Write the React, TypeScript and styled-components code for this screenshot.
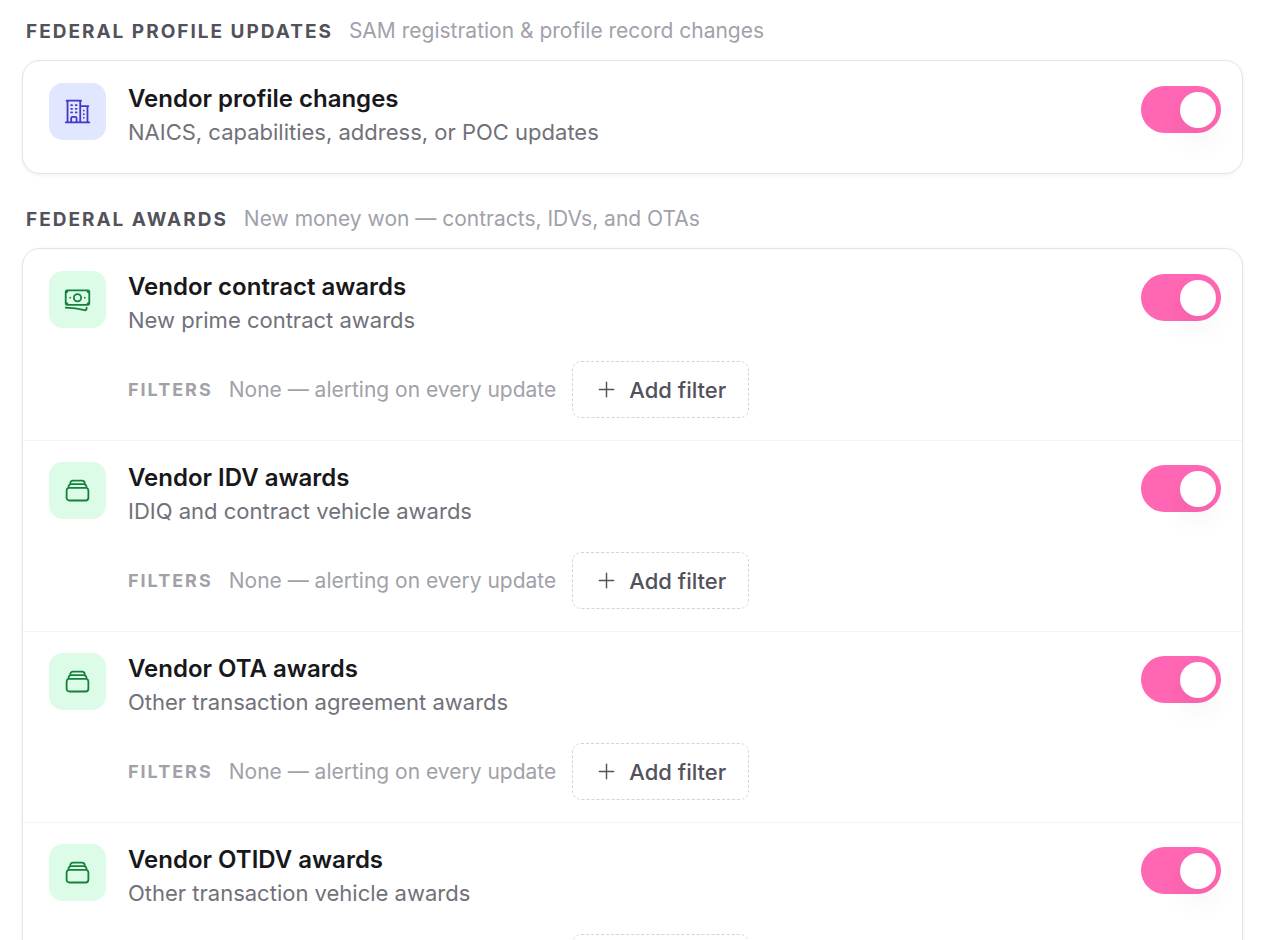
import React, { useId, useState } from "react";
import styled, { createGlobalStyle } from "styled-components";
import type { IconType } from "react-icons";
import {
  HiOutlineBanknotes,
  HiOutlineBuildingOffice2,
  HiOutlinePlus,
  HiOutlineRectangleStack,
} from "react-icons/hi2";

const GlobalStyle = createGlobalStyle`
  *, *::before, *::after { box-sizing: border-box; }
  body {
    margin: 0;
    background: #fff;
    font-family: Inter, "Liberation Sans", sans-serif;
    -webkit-font-smoothing: antialiased;
  }
`;

type Tone = "indigo" | "green";

const tones: Record<Tone, { background: string; color: string }> = {
  indigo: { background: "#e0e7ff", color: "#4338ca" },
  green: { background: "#dcfce7", color: "#15803d" },
};

const Page = styled.main`
  display: flex;
  flex-direction: column;
  gap: 30px;
  padding: 16px 23px 30px 22px;
`;

const Section = styled.section`
  display: flex;
  flex-direction: column;
  gap: 13px;
`;

const SectionHeader = styled.header`
  display: flex;
  align-items: baseline;
  gap: 16px;
  padding: 0 4px;
  line-height: 30px;
`;

const SectionTitle = styled.h2`
  margin: 0;
  font-size: 19px;
  font-weight: 700;
  letter-spacing: 2px;
  text-transform: uppercase;
  color: #52525b;
`;

const SectionNote = styled.p`
  margin: 0;
  font-size: 21px;
  color: #a1a1aa;
`;

const Card = styled.ul`
  margin: 0;
  padding: 0;
  list-style: none;
  background: #fff;
  border: 1px solid #e4e4e7;
  border-radius: 18px;
  box-shadow: 0 1px 4px rgba(0, 0, 0, 0.06);
`;

const Row = styled.li`
  display: flex;
  align-items: flex-start;
  gap: 22px;
  padding: 22px 21px 22px 26px;

  & + & {
    padding-top: 21px;
    border-top: 1px solid #f4f4f5;
  }
`;

const IconTile = styled.span<{ $tone: Tone }>`
  display: flex;
  flex: none;
  align-items: center;
  justify-content: center;
  width: 57px;
  height: 57px;
  border-radius: 14px;
  background: ${(p) => tones[p.$tone].background};
  color: ${(p) => tones[p.$tone].color};
`;

const Body = styled.div`
  display: flex;
  flex: 1;
  flex-direction: column;
  gap: 22px;
  min-width: 0;
`;

const Heading = styled.div`
  display: flex;
  flex-direction: column;
  padding-bottom: 2px;
`;

const AlertTitle = styled.label`
  font-size: 24px;
  font-weight: 600;
  line-height: 32px;
  color: #18181b;
`;

const AlertNote = styled.p`
  margin: 0;
  font-size: 22px;
  line-height: 34px;
  color: #71717a;
`;

const Filters = styled.div`
  display: flex;
  align-items: center;
  gap: 16px;
`;

const FiltersLabel = styled.span`
  font-size: 18px;
  font-weight: 700;
  letter-spacing: 2px;
  text-transform: uppercase;
  color: #a1a1aa;
`;

const FiltersValue = styled.span`
  font-size: 21px;
  color: #a1a1aa;
`;

const AddButton = styled.button`
  display: flex;
  align-items: center;
  gap: 11px;
  height: 57px;
  padding: 0 22px;
  border: 1px dashed #d4d4d8;
  border-radius: 9px;
  background: transparent;
  font: inherit;
  font-size: 22px;
  font-weight: 500;
  color: #52525b;
  cursor: pointer;
`;

const Switch = styled.input`
  appearance: none;
  display: flex;
  flex: none;
  align-items: center;
  width: 80px;
  height: 47px;
  margin: 3px 0 0;
  padding: 0 5px;
  border-radius: 24px;
  background: #e4e4e7;
  cursor: pointer;

  &::before {
    content: "";
    width: 36px;
    height: 36px;
    border-radius: 50%;
    background: #fff;
    box-shadow: 0 14px 28px rgba(0, 0, 0, 0.05);
  }

  &:checked {
    justify-content: flex-end;
    background: #ff66b3;
  }
`;

interface Alert {
  title: string;
  note: string;
  icon: IconType;
  tone: Tone;
  filterable: boolean;
}

const sections: { title: string; note: string; alerts: Alert[] }[] = [
  {
    title: "Federal profile updates",
    note: "SAM registration & profile record changes",
    alerts: [
      {
        title: "Vendor profile changes",
        note: "NAICS, capabilities, address, or POC updates",
        icon: HiOutlineBuildingOffice2,
        tone: "indigo",
        filterable: false,
      },
    ],
  },
  {
    title: "Federal awards",
    note: "New money won — contracts, IDVs, and OTAs",
    alerts: [
      {
        title: "Vendor contract awards",
        note: "New prime contract awards",
        icon: HiOutlineBanknotes,
        tone: "green",
        filterable: true,
      },
      {
        title: "Vendor IDV awards",
        note: "IDIQ and contract vehicle awards",
        icon: HiOutlineRectangleStack,
        tone: "green",
        filterable: true,
      },
      {
        title: "Vendor OTA awards",
        note: "Other transaction agreement awards",
        icon: HiOutlineRectangleStack,
        tone: "green",
        filterable: true,
      },
      {
        title: "Vendor OTIDV awards",
        note: "Other transaction vehicle awards",
        icon: HiOutlineRectangleStack,
        tone: "green",
        filterable: true,
      },
    ],
  },
];

function AlertRow({ alert }: { alert: Alert }) {
  const id = useId();
  const [enabled, setEnabled] = useState(true);
  const Icon = alert.icon;

  return (
    <Row>
      <IconTile $tone={alert.tone}>
        <Icon size={29} aria-hidden />
      </IconTile>
      <Body>
        <Heading>
          <AlertTitle htmlFor={id}>{alert.title}</AlertTitle>
          <AlertNote>{alert.note}</AlertNote>
        </Heading>
        {alert.filterable && (
          <Filters>
            <FiltersLabel>Filters</FiltersLabel>
            <FiltersValue>None — alerting on every update</FiltersValue>
            <AddButton type="button">
              <HiOutlinePlus size={23} aria-hidden />
              Add filter
            </AddButton>
          </Filters>
        )}
      </Body>
      <Switch
        id={id}
        type="checkbox"
        role="switch"
        checked={enabled}
        onChange={(event) => setEnabled(event.target.checked)}
      />
    </Row>
  );
}

export default function App() {
  return (
    <>
      <GlobalStyle />
      <Page>
        {sections.map((section) => (
          <Section key={section.title}>
            <SectionHeader>
              <SectionTitle>{section.title}</SectionTitle>
              <SectionNote>{section.note}</SectionNote>
            </SectionHeader>
            <Card>
              {section.alerts.map((alert) => (
                <AlertRow key={alert.title} alert={alert} />
              ))}
            </Card>
          </Section>
        ))}
      </Page>
    </>
  );
}
